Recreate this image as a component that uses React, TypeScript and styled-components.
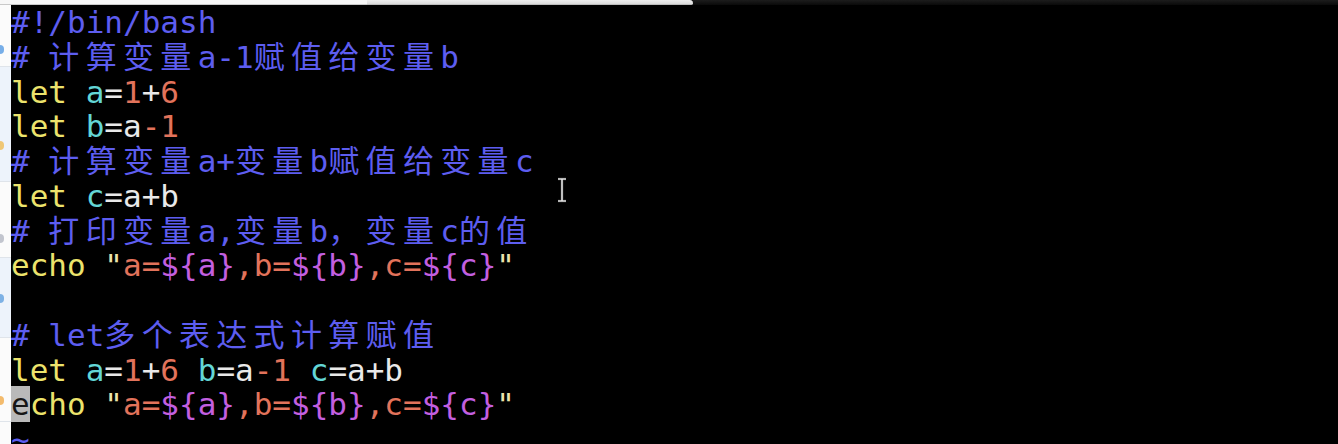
import React from "react";
import styled, { createGlobalStyle } from "styled-components";

const Global = createGlobalStyle`
  html, body { margin: 0; padding: 0; background: #000; overflow: hidden; }
  #root { width: 1338px; height: 444px; }
`;

const palette = {
  comment: "#5d5df0",
  kw: "#ece36c",
  id: "#63d6d6",
  num: "#e2735b",
  plain: "#e9e9e9",
  str: "#e2735b",
  quote: "#ece4ac",
  subst: "#c35fe0",
  tilde: "#5d5df0",
} as const;

type Col = keyof typeof palette;
type Seg = [Col, string] | ["cursor", string];

const Frame = styled.div`
  width: 1338px;
  height: 444px;
  overflow: hidden;
  display: grid;
  grid-template-columns: 11px 1fr;
  grid-template-rows: 5px 1fr;
  background: #000;
`;

const TopBar = styled.div`
  grid-column: 1 / -1;
  display: flex;
`;

const TabLight = styled.div`
  width: 367px;
  box-sizing: border-box;
  background: #f7f7f7;
  border-bottom: 1px solid #c9c9c9;
`;

const TabGrey = styled.div`
  width: 326px;
  box-sizing: border-box;
  background: linear-gradient(#efefef, #dcdcdc);
  border-bottom: 1px solid #bdbdbd;
  border-top-right-radius: 5px;
  border-bottom-right-radius: 3px;
`;

const TopDark = styled.div`
  flex: 1;
  background: linear-gradient(#1c1c1c, #0a0a0a);
`;

const Sidebar = styled.div`
  display: flex;
  flex-direction: column;
  background: #fbfbfb;
  overflow: hidden;
`;

const SideItem = styled.div<{ $h: number; $tint?: boolean; $pad: number }>`
  height: ${(p) => p.$h}px;
  flex: none;
  box-sizing: border-box;
  padding-top: ${(p) => p.$pad}px;
  background: ${(p) => (p.$tint ? "#edf3fb" : "#fbfbfb")};
  border-bottom: 1px solid #dfe4ea;
`;

const SideIcon = styled.div<{ $c: string }>`
  width: 4px;
  height: 9px;
  background: ${(p) => p.$c};
  border-radius: 0 5px 5px 0;
  opacity: 0.7;
`;

const Terminal = styled.div`
  position: relative;
  background: #000;
  overflow: hidden;
  font-family: "DejaVu Sans Mono", "Noto Sans CJK SC", monospace;
  font-size: 31px;
  display: grid;
  grid-auto-rows: 34.75px;
  align-content: start;
`;

const Line = styled.div`
  white-space: pre;
  line-height: 34.75px;
  height: 34.75px;
  color: ${palette.plain};
`;

const Tok = styled.span<{ $c: Col }>`
  color: ${(p) => palette[p.$c]};
`;

const Wide = styled.span`
  letter-spacing: 0.204em;
`;

const Cursor = styled.span`
  background: #b9b9b9;
  color: #161616;
`;

const IBeam = styled.svg`
  position: absolute;
  left: 544px;
  top: 172px;
`;

const CJK = /([\u3000-\u9fff\uff00-\uffef]+)/;

function renderText(t: string) {
  return t.split(CJK).map((part, i) =>
    part === "" ? null : CJK.test(part) ? <Wide key={i}>{part}</Wide> : <React.Fragment key={i}>{part}</React.Fragment>
  );
}

const lines: Seg[][] = [
  [["comment", "#!/bin/bash"]],
  [["comment", "# 计算变量a-1赋值给变量b"]],
  [["kw", "let"], ["plain", " "], ["id", "a"], ["plain", "="], ["num", "1"], ["plain", "+"], ["num", "6"]],
  [["kw", "let"], ["plain", " "], ["id", "b"], ["plain", "=a"], ["num", "-1"]],
  [["comment", "# 计算变量a+变量b赋值给变量c"]],
  [["kw", "let"], ["plain", " "], ["id", "c"], ["plain", "=a+b"]],
  [["comment", "# 打印变量a,变量b，变量c的值"]],
  [["kw", "echo"], ["plain", " "], ["quote", "\""], ["str", "a="], ["subst", "${a}"], ["str", ",b="], ["subst", "${b}"], ["str", ",c="], ["subst", "${c}"], ["quote", "\""]],
  [],
  [["comment", "# let多个表达式计算赋值"]],
  [["kw", "let"], ["plain", " "], ["id", "a"], ["plain", "="], ["num", "1"], ["plain", "+"], ["num", "6"], ["plain", " "], ["id", "b"], ["plain", "=a"], ["num", "-1"], ["plain", " "], ["id", "c"], ["plain", "=a+b"]],
  [["cursor", "e"], ["kw", "cho"], ["plain", " "], ["quote", "\""], ["str", "a="], ["subst", "${a}"], ["str", ",b="], ["subst", "${b}"], ["str", ",c="], ["subst", "${c}"], ["quote", "\""]],
  [["tilde", "~"]],
];

const sideItems = [
  { h: 62, tint: false, pad: 40, icon: "#3f8de0" },
  { h: 115, tint: true, pad: 74, icon: "#f0b43c" },
  { h: 76, tint: false, pad: 52, icon: "#a9aebb" },
  { h: 80, tint: true, pad: 36, icon: "#4d94dc" },
  { h: 84, tint: false, pad: 58, icon: "#f0a030" },
  { h: 40, tint: false, pad: 0, icon: "" },
];

export default function App() {
  return (
    <>
      <Global />
      <Frame>
        <TopBar>
          <TabLight />
          <TabGrey />
          <TopDark />
        </TopBar>
        <Sidebar>
          {sideItems.map((s, i) => (
            <SideItem key={i} $h={s.h} $tint={s.tint} $pad={s.pad}>
              {s.icon && <SideIcon $c={s.icon} />}
            </SideItem>
          ))}
        </Sidebar>
        <Terminal>
          {lines.map((segs, i) => (
            <Line key={i}>
              {segs.map(([c, t], j) =>
                c === "cursor" ? (
                  <Cursor key={j}>{t}</Cursor>
                ) : (
                  <Tok key={j} $c={c}>
                    {renderText(t)}
                  </Tok>
                )
              )}
            </Line>
          ))}
          <IBeam width="14" height="26" viewBox="0 0 14 26">
            <path d="M3 2 H11 M7 2 V24 M3 24 H11" stroke="#222" strokeWidth="3.2" fill="none" />
            <path d="M3 2 H11 M7 2 V24 M3 24 H11" stroke="#e6e6e6" strokeWidth="1.6" fill="none" />
          </IBeam>
        </Terminal>
      </Frame>
    </>
  );
}
